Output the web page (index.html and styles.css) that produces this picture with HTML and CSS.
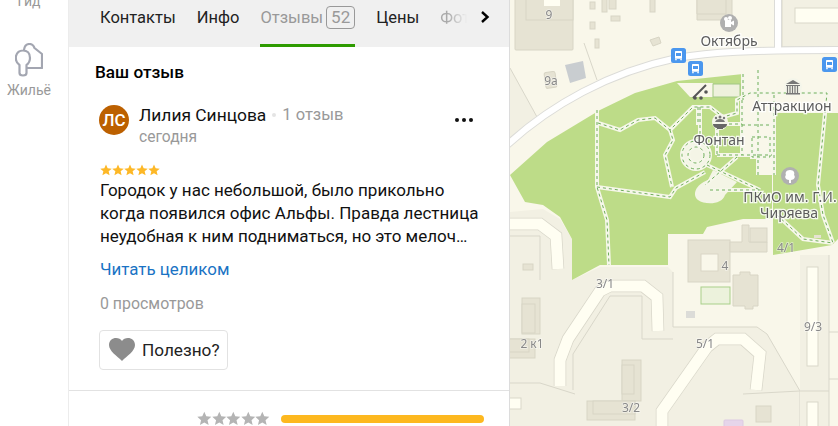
FILE: index.html
```html
<!DOCTYPE html>
<html lang="ru">
<head>
<meta charset="utf-8">
<title>Отзывы</title>
<link rel="stylesheet" href="styles.css">
</head>
<body>
<div class="app">
  <nav class="rail">
    <div class="rail-item rail-gid">Гид</div>
    <div class="rail-item rail-home">
      <svg class="rail-icon" viewBox="0 0 28 34" width="28" height="34"><path d="M4.500 22 C1.500 20 .5 16 1 13 C2 9 5 7.500 8 7.500 C12 7.500 15 10 15 15 C15 18 13.500 20.500 11.500 22 V30 Q11.500 32.500 8 32.500 Q4.500 32.500 4.500 30 Z M9 7 C9.500 3 12 1 14.500 1 C17 1 18.500 2.500 19.500 5 L27 11 V25 H12" fill="none" stroke="#a3a6b1" stroke-width="2.200" stroke-linejoin="round"/></svg>
      <span>Жильё</span>
    </div>
  </nav>
  <main class="panel">
    <div class="tabs">
      <span class="tab">Контакты</span>
      <span class="tab">Инфо</span>
      <span class="tab tab-active">Отзывы <b class="count">52</b></span>
      <span class="tab">Цены</span>
      <span class="tab tab-fade">Фото</span>
      <svg class="tab-next" viewBox="0 0 10 12" width="10" height="12"><path d="M2 1 l5.500 5 l-5.500 5" fill="none" stroke="#000" stroke-width="2.400"/></svg>
    </div>
    <section class="review">
      <h2 class="review-title">Ваш отзыв</h2>
      <div class="author">
        <div class="avatar">ЛС</div>
        <div class="author-info">
          <div class="author-line"><span class="author-name">Лилия Синцова</span><i class="dot"></i><span class="muted">1 отзыв</span></div>
          <div class="muted author-date">сегодня</div>
        </div>
        <div class="more"><i></i><i></i><i></i></div>
      </div>
      <div class="stars" aria-label="5 звёзд">
        <svg viewBox="0 0 24 24" width="12" height="12"><path class="star-gold" d="M12 1 l3.300 7.500 l8.200 .8 l-6.200 5.400 l1.900 8 l-7.200-4.300 l-7.200 4.300 l1.900-8 l-6.200-5.400 l8.200-.8 z"/></svg>
        <svg viewBox="0 0 24 24" width="12" height="12"><path class="star-gold" d="M12 1 l3.300 7.500 l8.200 .8 l-6.200 5.400 l1.900 8 l-7.200-4.300 l-7.200 4.300 l1.900-8 l-6.200-5.400 l8.200-.8 z"/></svg>
        <svg viewBox="0 0 24 24" width="12" height="12"><path class="star-gold" d="M12 1 l3.300 7.500 l8.200 .8 l-6.200 5.400 l1.900 8 l-7.200-4.300 l-7.200 4.300 l1.900-8 l-6.200-5.400 l8.200-.8 z"/></svg>
        <svg viewBox="0 0 24 24" width="12" height="12"><path class="star-gold" d="M12 1 l3.300 7.500 l8.200 .8 l-6.200 5.400 l1.900 8 l-7.200-4.300 l-7.200 4.300 l1.900-8 l-6.200-5.400 l8.200-.8 z"/></svg>
        <svg viewBox="0 0 24 24" width="12" height="12"><path class="star-gold" d="M12 1 l3.300 7.500 l8.200 .8 l-6.200 5.400 l1.900 8 l-7.200-4.300 l-7.200 4.300 l1.900-8 l-6.200-5.400 l8.200-.8 z"/></svg>
      </div>
      <p class="text">Городок у нас небольшой, было прикольно<br>когда появился офис Альфы. Правда лестница<br>неудобная к ним подниматься, но это мелоч…</p>
      <a class="read-more">Читать целиком</a>
      <div class="muted views">0 просмотров</div>
      <button class="useful">
        <svg viewBox="0 0 26 24" width="26" height="24"><path d="M13 23 C8 18 0 13 0 7 C0 2.500 3.500 0 7 0 C9.500 0 12 1.200 13 3 C14 1.200 16.500 0 19 0 C22.500 0 26 2.500 26 7 C26 13 18 18 13 23 z" fill="#8c8c8c"/></svg>
        <span>Полезно?</span>
      </button>
    </section>
    <div class="rating-row">
      <div class="grey-stars">
        <svg viewBox="0 0 24 24" width="14.600" height="15"><path class="star-grey" d="M12 1 l3.300 7.500 l8.200 .8 l-6.200 5.400 l1.900 8 l-7.200-4.300 l-7.200 4.300 l1.900-8 l-6.200-5.400 l8.200-.8 z"/></svg>
        <svg viewBox="0 0 24 24" width="14.600" height="15"><path class="star-grey" d="M12 1 l3.300 7.500 l8.200 .8 l-6.200 5.400 l1.900 8 l-7.200-4.300 l-7.200 4.300 l1.900-8 l-6.200-5.400 l8.200-.8 z"/></svg>
        <svg viewBox="0 0 24 24" width="14.600" height="15"><path class="star-grey" d="M12 1 l3.300 7.500 l8.200 .8 l-6.200 5.400 l1.900 8 l-7.200-4.300 l-7.200 4.300 l1.900-8 l-6.200-5.400 l8.200-.8 z"/></svg>
        <svg viewBox="0 0 24 24" width="14.600" height="15"><path class="star-grey" d="M12 1 l3.300 7.500 l8.200 .8 l-6.200 5.400 l1.900 8 l-7.200-4.300 l-7.200 4.300 l1.900-8 l-6.200-5.400 l8.200-.8 z"/></svg>
        <svg viewBox="0 0 24 24" width="14.600" height="15"><path class="star-grey" d="M12 1 l3.300 7.500 l8.200 .8 l-6.200 5.400 l1.900 8 l-7.200-4.300 l-7.200 4.300 l1.900-8 l-6.200-5.400 l8.200-.8 z"/></svg>
      </div>
      <div class="bar"></div>
    </div>
  </main>
  <div class="map">
    <svg class="map-svg" viewBox="0 0 328 426" width="328" height="426">
      <defs>
        <g id="bus"><rect width="15" height="15" rx="2.500" fill="#4b97ee"/><path d="M4 3.800 q0-.8 .8-.8 h5.400 q.8 0 .8 .8 v7 h-7 z M4.200 11 h1.500 v1.300 h-1.500 z M9.300 11 h1.500 v1.300 h-1.500 z" fill="#fff"/><rect x="5" y="5" width="5" height="3" fill="#4b97ee"/></g>
        <g id="walks">
          <path d="M87 110 V187 L97 220 L99 265"/>
          <path d="M87 187 L160 197 L166 188 L195 172"/>
          <path d="M88 123 L110 130 L128 120 L145 118 L160 130 L183 107 H200 L213 117 L227 113 V100 L240 93 H317 L308 185 L313 215 L323 243"/>
          <path d="M160 130 L163 140 L155 155 L162 187"/>
          <path d="M267 215 L293 239 L323 243"/>
          <path d="M233 74 V100 M248 70 V175 M264 95 V175 M188 107 V125 M207 115 V155 M232 100 V155 M190 107 V140"/>
          <path d="M207 155 H262 M207 124 H232 M242 137 H260 V157 H242 z M232 125 H262 M200 190 L250 190 M227 157 L195 185 M197 165 L250 190"/>
          <circle cx="186" cy="155" r="14"/><circle cx="186" cy="155" r="8"/>
        </g>
      </defs>
      <rect width="328" height="426" fill="#f9f7ea"/>

      <path class="ground" d="M0 68 L27 117 L0 142 z"/>
      <path class="ground-line" d="M0 68 L27 117 M74 43 L87 80"/>
      <path class="ground" d="M0 212 L33 209 L50 219 L62 239 L62 280 L90 267 L158 267 L163 272 L163 327 L247 327 L257 334 L290 391 L290 426 L0 426 z"/>
      <path class="ground-line" d="M163 272 L163 327 L247 327 L257 334 L290 391 L290 426"/>
      <path class="ground" d="M290 255 H319 V426 H290 z"/>
      <path class="ground-line" d="M319 391 H290 M319 255 V426 M319 332 H328 M319 379 H328 M233 394 L290 391"/>
      <path class="ground" d="M272 -1 H328 V47 H272 z"/>
      <path class="ground-line" d="M272 -1 V47 H328"/>

      <!-- park -->
      <path fill="#bddc88" d="M0 175 L37 142 L90 110 L125 93 L167 81 L233 74 V155 H248 V175 H262 V219 L233 219 L197 227 L193 234 L158 234 V265 L90 265 L62 280 V239 L50 217 L33 205 L15 202 z"/>
      <path fill="#bddc88" d="M265 113 H328 V239 L322 245 L263 255 V175 H265 z"/>
      <path fill="#f9f7ea" d="M167 83 L203 83 V97 H180 z"/>
      <rect x="203" y="84" width="27" height="13" fill="#eef1dd" stroke="#a2c883"/>

      <!-- plaza -->
      <path fill="#f4f5e6" d="M203 170 L227 182 L215 195 C212 205 195 205 188 200 C182 195 185 185 198 180 z"/>
      <circle cx="186" cy="155" r="15" fill="#f4f5e6"/>

      <!-- park paths -->
      <use class="walk-base" href="#walks"/>
      <use class="walk-dash" href="#walks"/>

      <!-- roads -->
      <path class="road-case" d="M-5 147 C40 105 100 72 167 58 C200 52 240 50 328 50 M268 0 V50"/>
      <path class="road" d="M-5 147 C40 105 100 72 167 58 C200 52 240 50 328 50 M268 0 V50"/>

      <!-- buildings -->
      <g class="bld">
        <rect x="5" y="-2" width="58" height="52" rx="1"/>
        <rect x="16" y="-2" width="47" height="22"/>
        <rect x="80" y="2" width="5" height="7"/><rect x="92" y="-1" width="5" height="13"/><rect x="99" y="-1" width="7" height="10"/>
        <rect x="101" y="16" width="9" height="5"/><rect x="80" y="22" width="5" height="7"/><rect x="85" y="39" width="4" height="9"/>
        <rect x="140" y="-1" width="5" height="13"/>
        <path d="M140 40 L149 37 L151 43 L143 46 z"/>
        <path d="M187 -1 H222 V20 H187 z"/><path d="M187 -1 H216 V14 H187 z"/>
        <rect x="35" y="72" width="11" height="16" rx="2" transform="rotate(-8 40 80)"/>
        <rect x="178" y="240" width="42" height="42"/>
        <path d="M232 225 H239 V242 H257 V252 H220 V242 H232 z"/><rect x="240" y="228" width="17" height="14"/>
        <path d="M223 275 H230 V272 H240 V275 H248 V306 H243 V309 H235 V306 H223 z"/>
        <rect x="12" y="298" width="18" height="36"/><rect x="12" y="304" width="13" height="29"/>
        <rect x="-1" y="339" width="26" height="19"/><rect x="-1" y="339" width="20" height="13"/>
        <rect x="112" y="360" width="19" height="41"/><rect x="112" y="365" width="12" height="29"/>
        <rect x="77" y="401" width="48" height="19"/><rect x="83" y="401" width="42" height="13"/>
        <rect x="246" y="406" width="15" height="16"/>
        <rect x="13" y="264" width="10" height="6"/>
      </g>
      <rect x="191" y="254" width="17" height="17" fill="#f9f7ea" stroke="#d9d6c6"/>
      <rect x="34" y="-1" width="16" height="7" fill="#fffef2"/>
      <path fill="#c9cdd0" d="M55 65 L73 61 L76 78 L60 83 z"/>
      <rect x="191" y="287" width="29" height="17" fill="#ecf2dc" stroke="#a9d08a"/>
      <rect x="176" y="311" width="9" height="7" fill="#dcdcd8"/>
      <rect x="304" y="235" width="7" height="3" fill="#e6e3d3"/>
      <rect x="214" y="420" width="19" height="8" rx="1" fill="#e6d5ea" stroke="#dccae2"/>

      <!-- ribbon houses -->
      <g class="rib-case">
        <path d="M-2 224 H30 L46 236 L48 269"/>
        <path d="M50 386 V360 L58 339 L90 291 L100 286 H133 L147 297 L148 331"/>
        <path d="M152 428 V411 L197 347 L207 339 H233 L250 354 L246 390"/>
      </g>
      <g class="rib">
        <path d="M-2 224 H30 L46 236 L48 269"/>
        <path d="M50 386 V360 L58 339 L90 291 L100 286 H133 L147 297 L148 331"/>
        <path d="M152 428 V411 L197 347 L207 339 H233 L250 354 L246 390"/>
      </g>
      <rect x="297" y="267" width="11" height="99" class="rib-rect"/>
      <rect x="297" y="402" width="11" height="30" class="rib-rect"/>
      <rect x="285" y="8" width="50" height="15" class="rib-rect"/>
      <rect x="-1" y="398" width="12" height="11" class="rib-rect"/>
      <path class="ground-line" d="M63 390 V354 L100 296 H132 V339 H163 M0 236 H30 V280 M65 394 L30 383 L0 383"/>

      <!-- poi icons -->
      <use href="#bus" x="161" y="48"/>
      <use href="#bus" x="178" y="61"/>
      <use href="#bus" x="312" y="57"/>

      <circle cx="219" cy="23" r="9" fill="#b0b0b0"/>
      <path d="M215 20 h6 v7 h-6 z M221 22 l3 -1.500 v5 l-3 -1.500 z" fill="#fff"/><circle cx="216" cy="19" r="2" fill="#fff"/><circle cx="220" cy="18" r="2" fill="#fff"/>

      <circle cx="283" cy="87" r="9" fill="#f4f5ea"/>
      <path d="M276 84 L283 80 L290 84 z M276 85 h14 v1 h-14 z M276 93 h14 v1.500 h-14 z" fill="#777"/>
      <path d="M277.500 86 v7 M280 86 v7 M282.500 86 v7 M285 86 v7 M287.500 86 v7" stroke="#777" stroke-width="1.200"/>

      <circle cx="280" cy="176" r="9" fill="#b0b0b0"/>
      <path d="M280 170 c4 0 5 3 4 5 c2 2 0 5-3 5 v3 h-2 v-3 c-3 0-5-3-3-5 c-1-2 0-5 4-5 z" fill="#fff"/>

      <path d="M183 98 L196 85" stroke="#555" stroke-width="2" fill="none"/>
      <circle cx="185" cy="98" r="1.800" fill="#555"/><circle cx="191" cy="98" r="1.800" fill="#555"/><circle cx="196" cy="92" r="1.800" fill="#555"/>

      <circle cx="210" cy="122" r="8" fill="#f4f5ea"/>
      <path d="M203 124 h14 c0 3-3 4-4 4 v1 h-6 v-1 c-1 0-4-1-4-4 z" fill="#666"/>
      <path d="M205 122 c1-2 2-3 5-3 s4 1 5 3 z" fill="#777"/>
      <circle cx="210" cy="117" r="1.500" fill="#777"/><circle cx="206" cy="118" r="1.200" fill="#777"/><circle cx="214" cy="118" r="1.200" fill="#777"/>

      <!-- labels -->
      <text class="poi" x="219" y="46">Октябрь</text>
      <text class="poi" x="282" y="111">Аттракцион</text>
      <text class="poi" x="209" y="145">Фонтан</text>
      <text class="poi" x="280" y="202">ПКиО им. Г.И.</text>
      <text class="poi" x="279" y="218">Чиряева</text>
      <text class="num" x="39" y="19">9</text>
      <text class="num" x="41" y="85">9а</text>
      <text class="num" x="276" y="252">4/1</text>
      <text class="num" x="215" y="270">4</text>
      <text class="num" x="95" y="288">3/1</text>
      <text class="num" x="22" y="348">2 к1</text>
      <text class="num" x="195" y="348">5/1</text>
      <text class="num" x="121" y="412">3/2</text>
      <text class="num" x="303" y="331">9/3</text>
    </svg>
  </div>
</div>
</body>
</html>
```
FILE: styles.css
```css
* { box-sizing: border-box; }
html, body { margin: 0; padding: 0; width: 838px; height: 426px; overflow: hidden; background: #fff; }
body { font-family: Roboto, "Liberation Sans", sans-serif; color: #111; }
.app { display: flex; width: 838px; height: 426px; overflow: hidden; }

.rail { width: 69px; flex: none; border-right: 1px solid #ececec; background: #fff; display: flex; flex-direction: column; align-items: center; }
.rail-item { color: #999; font-size: 14px; line-height: 16px; margin-right: 10px; }
.rail-gid { margin-top: -7px; }
.rail-home { margin-top: 34px; display: flex; flex-direction: column; align-items: center; }
.rail-icon { display: block; margin-bottom: 5px; }

.panel { width: 441px; flex: none; display: flex; flex-direction: column; background: #fff; border-right: 1px solid #dcdcdc; }
.tabs { height: 47px; flex: none; background: #f0f0f0; display: flex; align-items: stretch; padding-left: 31px; gap: 21px; font-size: 16.500px; position: relative; overflow: hidden; }
.tab { display: flex; align-items: center; height: 47px; padding-bottom: 13px; white-space: nowrap; color: #222; }
.tab-active { color: #999; border-bottom: 3px solid #2e9b00; padding-bottom: 10px; }
.tab-fade { color: #aaa; width: 27px; overflow: hidden; -webkit-mask-image: linear-gradient(to right, #000 30%, transparent); mask-image: linear-gradient(to right, #000 30%, transparent); }
.count { font-weight: 400; display: inline-block; margin-left: 3px; border: 1px solid #999; border-radius: 4px; font-size: 17px; line-height: 21px; width: 29px; text-align: center; }
.tab-next { position: absolute; left: 411px; top: 11px; }

.review { padding: 15px 26px 0 31px; height: 344px; border-bottom: 1px solid #e2e2e2; flex: none; }
.review-title { margin: 0 0 0 -5px; font-size: 17.200px; line-height: 20px; font-weight: 500; color: #000; }
.author { display: flex; margin-top: 23px; position: relative; }
.avatar { width: 30px; height: 30px; border-radius: 50%; background: #bc6000; color: #fff; font-size: 17px; font-weight: 500; line-height: 30px; text-align: center; flex: none; margin-left: -1px; }
.author-info { margin-left: 10px; }
.author-line { display: flex; align-items: center; font-size: 16.500px; line-height: 20px; }
.author-name { color: #111; font-size: 17.400px; }
.dot { width: 4px; height: 4px; border-radius: 50%; background: #e4e4e4; margin: 0 6px; }
.muted { color: #999; }
.author-date { font-size: 15.600px; line-height: 18px; margin-top: 3px; }
.more { position: absolute; right: 10px; top: 13px; display: flex; gap: 3px; }
.more i { width: 4px; height: 4px; border-radius: 50%; background: #111; }
.stars { display: flex; margin-top: 18px; gap: 0; height: 12px; }
.stars svg { display: block; }
.star-gold { fill: #fdb827; }
.star-grey { fill: #b4b4b4; }
.text { margin: 3px 0 0; font-size: 17px; line-height: 23px; color: #111; white-space: nowrap; }
.read-more { display: block; margin-top: 11px; font-size: 16.900px; line-height: 20px; color: #1a73c4; }
.views { margin-top: 15px; font-size: 15.900px; line-height: 20px; }
.useful { display: flex; align-items: center; gap: 7px; margin: 16px 0 0 -1px; height: 40px; padding: 0 7px 0 9px; border: 1px solid #e2e2e2; border-radius: 4px; background: #fff; font: inherit; font-size: 17.200px; color: #222; }
.rating-row { display: flex; align-items: center; padding: 20px 0 0 128px; gap: 11px; }
.grey-stars { display: flex; gap: 0; }
.grey-stars svg { display: block; }
.bar { width: 203px; height: 8px; border-radius: 4px; background: #fdb81f; }

.map { width: 328px; flex: none; height: 426px; overflow: hidden; }
.map-svg { display: block; filter: blur(.4px); }
.ground { fill: #f2f0e3; }
.ground-line { fill: none; stroke: #d9d7ca; stroke-width: 1; }
.bld rect, .bld path { fill: #e6e3d3; stroke: #d8d5c5; stroke-width: 1; }
.road-case { fill: none; stroke: #dcdcd8; stroke-width: 8; }
.road { fill: none; stroke: #fff; stroke-width: 6; }
.rib-case path { fill: none; stroke: #d9d7ca; stroke-width: 12.500; }
.rib path { fill: none; stroke: #fffef2; stroke-width: 11; }
.rib-rect { fill: #fffef2; stroke: #d9d7ca; }
.walk-base { fill: none; stroke: #f6f7ea; stroke-width: 4; }
.walk-dash { fill: none; stroke: #6fae5b; stroke-width: 1; stroke-dasharray: 3 3; }
.poi { font-family: "Noto Sans", sans-serif; font-size: 14px; fill: #5c5c5c; text-anchor: middle; stroke: #fff; stroke-width: 2.500; paint-order: stroke; stroke-opacity: .85; }
.num { font-family: "Noto Sans", sans-serif; font-size: 12px; fill: #888; text-anchor: middle; stroke: #fff; stroke-width: 1.500; paint-order: stroke; stroke-opacity: .5; }
```
